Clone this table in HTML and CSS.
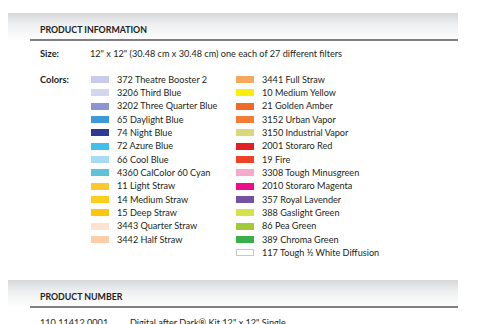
FILE: index.html
```html
<!DOCTYPE html>
<html>
<head>
<meta charset="utf-8">
<link rel="stylesheet" href="styles.css">
</head>
<body>
<div class="page">
  <section class="section">
    <div class="band"><h2 class="band-title">PRODUCT INFORMATION</h2></div>
    <div class="info">
      <div class="row size-row">
        <div class="label">Size:</div>
        <div class="value">12" x 12" (30.48 cm x 30.48 cm) one each of 27 different filters</div>
      </div>
      <div class="row colors-row">
        <div class="label">Colors:</div>
        <div class="value colors">
          <ul class="list">
            <li><span class="sw" style="background:#c9cbeb"></span>372 Theatre Booster 2</li>
            <li><span class="sw" style="background:#d4d6ef"></span>3206 Third Blue</li>
            <li><span class="sw" style="background:#8c95d0"></span>3202 Three Quarter Blue</li>
            <li><span class="sw" style="background:#3d9ad6"></span>65 Daylight Blue</li>
            <li><span class="sw" style="background:#2d3a93"></span>74 Night Blue</li>
            <li><span class="sw" style="background:#43c0ea"></span>72 Azure Blue</li>
            <li><span class="sw" style="background:#a8dcf4"></span>66 Cool Blue</li>
            <li><span class="sw" style="background:#5ec3d6"></span>4360 CalColor 60 Cyan</li>
            <li><span class="sw" style="background:#fdc72e"></span>11 Light Straw</li>
            <li><span class="sw" style="background:#fcd01a"></span>14 Medium Straw</li>
            <li><span class="sw" style="background:#fcc50e"></span>15 Deep Straw</li>
            <li><span class="sw" style="background:#fde2d1"></span>3443 Quarter Straw</li>
            <li><span class="sw" style="background:#fccda6"></span>3442 Half Straw</li>
          </ul>
          <ul class="list">
            <li><span class="sw" style="background:#f6a95a"></span>3441 Full Straw</li>
            <li><span class="sw" style="background:#fbee0b"></span>10 Medium Yellow</li>
            <li><span class="sw" style="background:#f26a2a"></span>21 Golden Amber</li>
            <li><span class="sw" style="background:#f37d36"></span>3152 Urban Vapor</li>
            <li><span class="sw" style="background:#dcd77a"></span>3150 Industrial Vapor</li>
            <li><span class="sw" style="background:#e31e26"></span>2001 Storaro Red</li>
            <li><span class="sw" style="background:#ef4328"></span>19 Fire</li>
            <li><span class="sw" style="background:#f6aacb"></span>3308 Tough Minusgreen</li>
            <li><span class="sw" style="background:#ec0d8c"></span>2010 Storaro Magenta</li>
            <li><span class="sw" style="background:#7452a3"></span>357 Royal Lavender</li>
            <li><span class="sw" style="background:#d5e24c"></span>388 Gaslight Green</li>
            <li><span class="sw" style="background:#a3c93a"></span>86 Pea Green</li>
            <li><span class="sw" style="background:#3aae49"></span>389 Chroma Green</li>
            <li><span class="sw sw-white"></span>117 Tough ½ White Diffusion</li>
          </ul>
        </div>
      </div>
    </div>
  </section>
  <section class="section section-number">
    <div class="band"><h2 class="band-title">PRODUCT NUMBER</h2></div>
    <div class="number-row">
      <div class="num">110 11412 0001</div>
      <div class="desc">Digital after Dark® Kit 12" x 12" Single</div>
    </div>
  </section>
</div>
</body>
</html>
```

FILE: styles.css
```css
html, body {
  margin: 0;
  padding: 0;
  background: #fff;
}
body {
  font-family: "Lato", "Open Sans", sans-serif;
  font-size: 9.15px;
  color: #231f20;
}
.page {
  padding-top: 13px;
}
.band {
  margin-left: 8px;
  width: 450px;
  background: linear-gradient(to bottom, #d6d7d9 0%, #eeeff0 40%, #ffffff 100%);
}
.band-title {
  margin: 0 0 0 22px;
  padding: 10px 0 2px 10px;
  line-height: 14px;
  font-size: 8.8px;
  font-weight: 700;
  border-bottom: 2px solid #7f7f7f;
}
.info {
  margin-left: 40px;
  display: flex;
  flex-direction: column;
}
.row {
  display: flex;
  line-height: 13.33px;
}
.size-row {
  margin-top: 6px;
}
.colors-row {
  margin-top: 12.5px;
}
.label {
  width: 50px;
  font-size: 9.3px;
  font-weight: 700;
}
.colors {
  display: flex;
  margin-left: 1px;
}
.list {
  list-style: none;
  margin: 0;
  padding: 0;
  width: 145px;
}
.list li {
  display: flex;
  align-items: center;
  height: 13.33px;
  white-space: nowrap;
}
.sw {
  width: 18px;
  height: 7px;
  margin-right: 8px;
  flex: none;
}
.sw-white {
  background: #fff;
  box-sizing: border-box;
  border: 1px solid #c8c8c8;
}
.section-number {
  margin-top: 20.7px;
}
.number-row {
  display: flex;
  margin: 8px 0 0 40px;
  line-height: 13.33px;
}
.num {
  width: 90px;
}
```
